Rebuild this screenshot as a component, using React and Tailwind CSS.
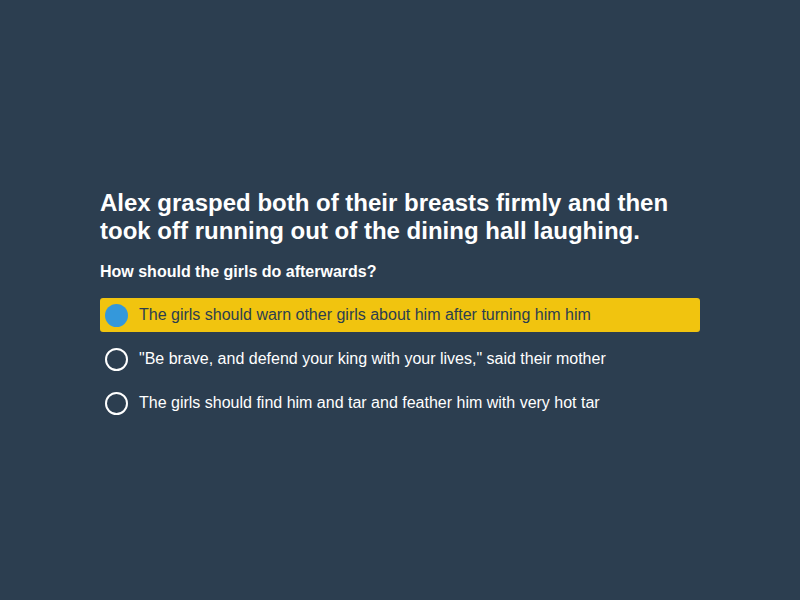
import { useState } from "react";

const options = [
  "The girls should warn other girls about him after turning him him",
  "\"Be brave, and defend your king with your lives,\" said their mother",
  "The girls should find him and tar and feather him with very hot tar",
];

export default function App() {
  const [selected, setSelected] = useState(0);

  return (
    <div className="min-h-screen w-full bg-[#2c3e50] flex items-center justify-center pt-[9px] font-['Liberation_Sans',Arial,sans-serif]">
      <div className="w-[600px] flex flex-col">
        <h1 className="text-white font-bold text-[24px] leading-[28px]">
          Alex grasped both of their breasts firmly and then took off running
          out of the dining hall laughing.
        </h1>
        <p className="text-white font-bold text-[16px] leading-[24px] mt-[15px] mb-[14px]">
          How should the girls do afterwards?
        </p>

        {/* Answer options */}
        <div className="flex flex-col gap-[10px]">
          {options.map((text, i) => {
            const active = selected === i;
            return (
              <button
                key={i}
                onClick={() => setSelected(i)}
                className={
                  active
                    ? "flex items-center gap-[11px] h-[34px] px-[5px] rounded-[3px] bg-[#f1c40f] text-[#2c3e50] text-left"
                    : "flex items-center gap-[11px] h-[34px] px-[5px] rounded-[3px] text-white text-left"
                }
              >
                {active ? (
                  <span className="w-[23px] h-[23px] rounded-full bg-[#3498db] shrink-0" />
                ) : (
                  <span className="w-[23px] h-[23px] rounded-full border-2 border-white shrink-0" />
                )}
                <span className="text-[16px]">{text}</span>
              </button>
            );
          })}
        </div>
      </div>
    </div>
  );
}
